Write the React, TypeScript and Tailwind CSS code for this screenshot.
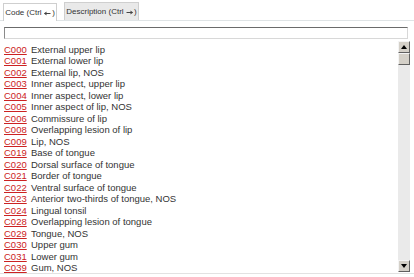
import React from "react";

const rows: [string, string][] = [
  ["C000", "External upper lip"],
  ["C001", "External lower lip"],
  ["C002", "External lip, NOS"],
  ["C003", "Inner aspect, upper lip"],
  ["C004", "Inner aspect, lower lip"],
  ["C005", "Inner aspect of lip, NOS"],
  ["C006", "Commissure of lip"],
  ["C008", "Overlapping lesion of lip"],
  ["C009", "Lip, NOS"],
  ["C019", "Base of tongue"],
  ["C020", "Dorsal surface of tongue"],
  ["C021", "Border of tongue"],
  ["C022", "Ventral surface of tongue"],
  ["C023", "Anterior two-thirds of tongue, NOS"],
  ["C024", "Lingual tonsil"],
  ["C028", "Overlapping lesion of tongue"],
  ["C029", "Tongue, NOS"],
  ["C030", "Upper gum"],
  ["C031", "Lower gum"],
  ["C039", "Gum, NOS"],
];

function SbButton({ up }: { up: boolean }) {
  return (
    <div className="w-[12px] h-[12px] bg-[#d4d0c8] border-t border-l border-t-[#f4f4f4] border-l-[#f4f4f4] border-r border-b border-r-[#606060] border-b-[#606060] flex items-center justify-center">
      <svg width="6" height="4" viewBox="0 0 6 4">
        {up ? <path d="M3 0 L6 4 L0 4 Z" fill="#000" /> : <path d="M0 0 L6 0 L3 4 Z" fill="#000" />}
      </svg>
    </div>
  );
}

function Arrow({ left }: { left: boolean }) {
  return (
    <svg width="7" height="5" viewBox="0 0 7 5" className="ml-[2.5px] mr-[1px] mt-[1px]">
      <line x1="0.5" y1="2.5" x2="6.5" y2="2.5" stroke="#444" strokeWidth="1" />
      {left ? (
        <path d="M0 2.5 L2.5 0.5 L2.5 4.5 Z" fill="#444" />
      ) : (
        <path d="M7 2.5 L4.5 0.5 L4.5 4.5 Z" fill="#444" />
      )}
    </svg>
  );
}

export default function App() {
  return (
    <div
      className="w-[414px] h-[277px] bg-white overflow-hidden text-[#333]"
      style={{ fontFamily: '"Liberation Sans", Arial, sans-serif' }}
    >
      <div className="flex items-end gap-[7px] pl-[3px] pt-[3px] h-[21px] border-b border-[#dfe4e6]">
        <div className="h-[18px] w-[54px] pt-[1px] flex items-center justify-center bg-white border border-b-0 border-[#cfcfcf] text-[8px] text-[#333] -mb-px whitespace-nowrap">
          Code (Ctrl<Arrow left />)
        </div>
        <div className="h-[18px] w-[75px] pt-[1px] flex items-center justify-center bg-[#e9e9e9] border border-b-0 border-[#cfcfcf] text-[8px] text-[#333] whitespace-nowrap">
          Description (Ctrl<Arrow left={false} />)
        </div>
      </div>
      <div className="pl-[4px] pr-[6px] pt-[6px]">
        <div className="h-[12px] w-[404px] bg-white border border-[#d8d8d8] border-t-[#6b6b6b] border-l-[#8a8a8a]" />
      </div>
      <div className="flex pl-[4px] pt-[2px] pr-[4px] h-[234px]">
        <div className="flex-1 pt-[2.5px]">
          {rows.map(([code, desc]) => (
            <div key={code} className="flex items-center h-[11.5px] text-[9.5px] leading-[11.5px] whitespace-nowrap">
              <span className="w-[27px] text-[#cc2222] underline">{code}</span>
              <span className="text-[#333]">{desc}</span>
            </div>
          ))}
        </div>
        <div className="w-[12px] h-[231px] flex flex-col bg-[#ececec]">
          <SbButton up />
          <div className="w-[12px] h-[12px] bg-[#d4d0c8] border-t border-l border-t-[#f4f4f4] border-l-[#f4f4f4] border-r border-b border-r-[#606060] border-b-[#606060]" />
          <div className="flex-1 bg-[#eaeaea]" />
          <SbButton up={false} />
        </div>
      </div>
      <div className="border-t border-[#e2e2e2]" />
    </div>
  );
}
